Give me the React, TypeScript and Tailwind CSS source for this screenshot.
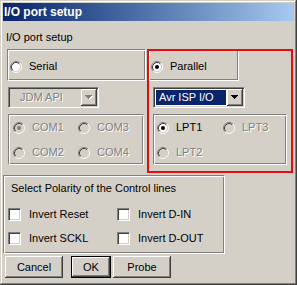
import React from 'react'

const etched =
  'border border-t-[#808080] border-l-[#808080] border-b-white border-r-white shadow-[inset_1px_1px_0_#fff,inset_-1px_-1px_0_#808080]'
const sunken =
  'border border-t-[#808080] border-l-[#808080] border-b-white border-r-white shadow-[inset_1px_1px_0_#404040,inset_-1px_-1px_0_#d4d0c8]'
const raised =
  'shadow-[inset_-1px_-1px_0_#404040,inset_1px_1px_0_#fff,inset_-2px_-2px_0_#808080,inset_2px_2px_0_#d4d0c8]'

function Label({ children, disabled = false }: { children: React.ReactNode; disabled?: boolean }) {
  return (
    <span className={`leading-[13px] whitespace-nowrap ${disabled ? 'text-[#808080] [text-shadow:1px_1px_0_#fff]' : 'text-black'}`}>
      {children}
    </span>
  )
}

function Radio({ checked = false, disabled = false }: { checked?: boolean; disabled?: boolean }) {
  return (
    <svg width="12" height="12" viewBox="0 0 12 12" className="shrink-0">
      <circle cx="6" cy="6" r="4.5" fill={disabled ? '#d4d0c8' : '#fff'} />
      <path d="M2.11 9.89A5.5 5.5 0 0 1 9.89 2.11" stroke="#808080" fill="none" />
      <path d="M9.89 2.11A5.5 5.5 0 0 1 2.11 9.89" stroke="#fff" fill="none" />
      <path d="M2.82 9.18A4.5 4.5 0 0 1 9.18 2.82" stroke="#404040" fill="none" />
      <path d="M9.18 2.82A4.5 4.5 0 0 1 2.82 9.18" stroke="#d4d0c8" fill="none" />
      {checked && <circle cx="6" cy="6" r="2" fill={disabled ? '#808080' : '#000'} />}
    </svg>
  )
}

function RadioItem({ label, checked, disabled }: { label: string; checked?: boolean; disabled?: boolean }) {
  return (
    <div className="flex h-[13px] items-center">
      <Radio checked={checked} disabled={disabled} />
      <span className="ml-[7px]">
        <Label disabled={disabled}>{label}</Label>
      </span>
    </div>
  )
}

function Check({ label }: { label: string }) {
  return (
    <div className="flex h-[13px] items-center">
      <div className={`${sunken} h-[13px] w-[13px] shrink-0 bg-white`} />
      <span className="ml-[8px]">
        <Label>{label}</Label>
      </span>
    </div>
  )
}

function Arrow({ disabled = false }: { disabled?: boolean }) {
  const rows = (dx: number, dy: number, c: string) =>
    [7, 5, 3, 1].map((w, i) => <rect key={`${c}${i}`} x={i + dx} y={i + dy} width={w} height={1} fill={c} />)
  return (
    <svg width="8" height="5" shapeRendering="crispEdges">
      {disabled && rows(1, 1, '#fff')}
      {rows(0, 0, disabled ? '#808080' : '#000')}
    </svg>
  )
}

function Combo({ text, disabled = false, className }: { text: string; disabled?: boolean; className: string }) {
  return (
    <div className={`${sunken} ${className} flex h-[21px] p-[1px] ${disabled ? 'bg-[#d4d0c8]' : 'bg-white'}`}>
      {disabled ? (
        <div className="flex flex-1 items-center pl-[10px]">
          <Label disabled>{text}</Label>
        </div>
      ) : (
        <div className="flex-1 p-[1px]">
          <div className="flex h-full items-center bg-[#0a246a] pl-[3px] leading-[13px] text-white">{text}</div>
        </div>
      )}
      <div className={`${raised} flex h-full w-[16px] items-center justify-center bg-[#d4d0c8]`}>
        <Arrow disabled={disabled} />
      </div>
    </div>
  )
}

function Button({ children, isDefault = false, className }: { children: string; isDefault?: boolean; className: string }) {
  return (
    <div className={`${className} h-full ${isDefault ? 'border border-black' : ''}`}>
      <div className={`${raised} flex h-full items-center justify-center bg-[#d4d0c8] leading-[13px]`}>{children}</div>
    </div>
  )
}

export default function App() {
  return (
    <div className="relative flex h-[285px] w-[297px] flex-col bg-[#d4d0c8] p-[3px] font-['Liberation_Sans',Arial,sans-serif] text-[11px] text-black shadow-[inset_-1px_-1px_0_#404040,inset_1px_1px_0_#d4d0c8,inset_-2px_-2px_0_#808080,inset_2px_2px_0_#fff]">
      <div className="flex h-[18px] shrink-0 items-center bg-linear-to-r from-[#0a246a] to-[#a6caf0] pl-[1px] text-[12px] font-bold text-white">
        I/O port setup
      </div>

      <div className="ml-[3px] mt-[10px] leading-[13px]">I/O port setup</div>

      <div className="mt-[5px] flex items-start">
        <div className="ml-[4px] flex w-[139px] flex-col">
          <div className={`${etched} h-[32px] w-[139px] pl-[2px] pt-[10px]`}>
            <RadioItem label="Serial" />
          </div>
          <Combo text="JDM API" disabled className="ml-[1px] mt-[6px] w-[91px]" />
          <div className={`${etched} ml-[1px] mt-[6px] h-[51px] w-[136px] pl-[4px] pt-[6px]`}>
            <div className="grid grid-cols-[65px_auto] gap-y-[12px]">
              <RadioItem label="COM1" checked disabled />
              <RadioItem label="COM3" disabled />
              <RadioItem label="COM2" disabled />
              <RadioItem label="COM4" disabled />
            </div>
          </div>
        </div>

        <div className="ml-[2px] flex flex-col">
          <div className={`${etched} h-[32px] w-[91px] pl-[2px] pt-[10px]`}>
            <RadioItem label="Parallel" checked />
          </div>
          <Combo text="Avr ISP I/O" className="ml-[5px] mt-[6px] w-[92px]" />
          <div className={`${etched} ml-[5px] mt-[6px] h-[51px] w-[134px] pl-[3px] pt-[6px]`}>
            <div className="grid grid-cols-[66px_auto] gap-y-[12px]">
              <RadioItem label="LPT1" checked />
              <RadioItem label="LPT3" disabled />
              <RadioItem label="LPT2" disabled />
            </div>
          </div>
        </div>
      </div>

      <div className={`${etched} mt-[10px] h-[79px] w-[222px] pt-[6px]`}>
        <div className="pl-[7px] leading-[13px]">Select Polarity of the Control lines</div>
        <div className="mt-[13px] grid grid-cols-[109px_auto] gap-y-[11px] pl-[4px]">
          <Check label="Invert Reset" />
          <Check label="Invert D-IN" />
          <Check label="Invert SCKL" />
          <Check label="Invert D-OUT" />
        </div>
      </div>

      <div className="mt-[2px] flex h-[22px]">
        <Button className="ml-[2px] w-[58px]">Cancel</Button>
        <Button isDefault className="ml-[8px] w-[40px]">OK</Button>
        <Button className="ml-[2px] w-[58px]">Probe</Button>
      </div>

      <div className="pointer-events-none absolute left-[147px] top-[49px] h-[124px] w-[146px] border-2 border-[#e01010]" />
    </div>
  )
}
